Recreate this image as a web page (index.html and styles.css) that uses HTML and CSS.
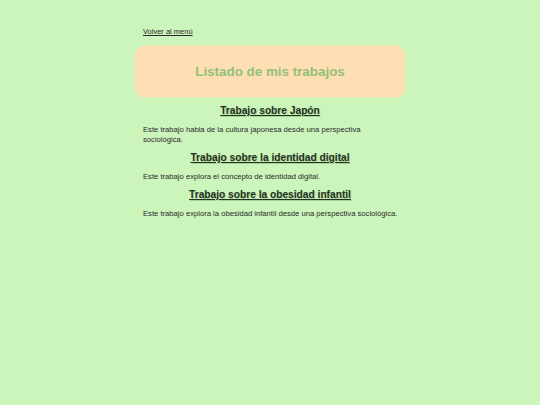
FILE: index.html
```html
<!DOCTYPE html>
<html lang="es">
<head>
<meta charset="utf-8">
<title>Listado de mis trabajos</title>
<link rel="stylesheet" href="styles.css">
</head>
<body>
<div class="page">
  <a class="back" href="#">Volver al menú</a>
  <header class="banner"><h1>Listado de mis trabajos</h1></header>
  <section class="work">
    <h2><a href="#">Trabajo sobre Japón</a></h2>
    <p>Este trabajo habla de la cultura japonesa desde una perspectiva sociológica.</p>
  </section>
  <section class="work">
    <h2><a href="#">Trabajo sobre la identidad digital</a></h2>
    <p>Este trabajo explora el concepto de identidad digital.</p>
  </section>
  <section class="work">
    <h2><a href="#">Trabajo sobre la obesidad infantil</a></h2>
    <p>Este trabajo explora la obesidad infantil desde una perspectiva sociológica.</p>
  </section>
</div>
</body>
</html>
```
FILE: styles.css
```css
html, body {
  margin: 0;
  padding: 0;
  background: #ccf5bc;
  font-family: "Liberation Sans", Arial, sans-serif;
  color: #2a2a2a;
}
.page {
  width: 270px;
  margin: 0 auto;
  padding-top: 27px;
}
.back {
  display: block;
  margin-left: 8px;
  font-size: 7.5px;
  line-height: 10px;
  color: #2a2a2a;
}
.banner {
  margin-top: 9px;
  height: 51px;
  background: #fedfb4;
  border-radius: 10px;
  box-shadow: 0 0 3px #fedfb4;
  display: flex;
  align-items: center;
  justify-content: center;
}
.banner h1 {
  margin: 0;
  font-size: 13.4px;
  font-weight: bold;
  color: #93bf78;
}
.work h2 {
  margin: 0;
  text-align: center;
  font-size: 10.2px;
  line-height: 14px;
  font-weight: bold;
}
.work h2 a {
  color: #233023;
  text-shadow: 1px 1px 1px #a6d296;
}
.work p {
  margin: 7px 0 0;
  padding: 0 5px 0 8px;
  font-size: 7.65px;
  line-height: 10px;
}
.work:first-of-type { margin-top: 7px; }
.work + .work { margin-top: 6px; }
```
